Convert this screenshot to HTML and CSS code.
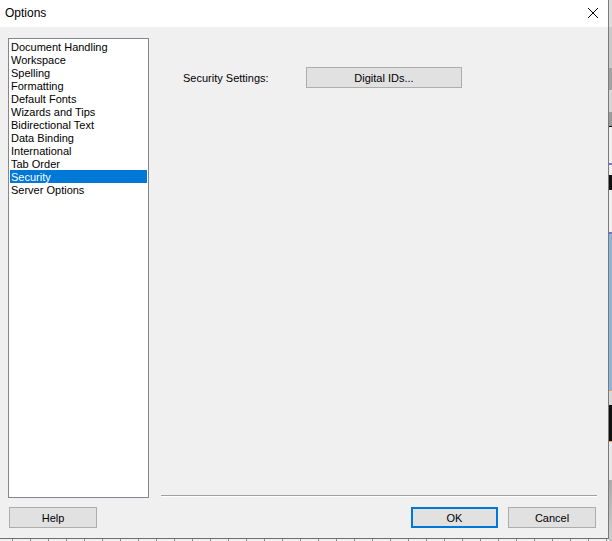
FILE: index.html
```html
<!DOCTYPE html>
<html lang="en">
<head>
	<meta charset="UTF-8">
	<title>Options</title>
	<link rel="stylesheet" href="styles.css">
</head>
<body>
	<div class="screen">
		<div class="dialog">
			<div class="titlebar">
				<span class="title">Options</span>
				<svg class="close" width="12" height="12" viewBox="0 0 12 12">
					<path d="M1 1 L11 11 M11 1 L1 11" stroke="#000" stroke-width="1" fill="none"/>
				</svg>
			</div>
			<div class="content">
				<div class="main">
					<ul class="category-list">
						<li>Document Handling</li>
						<li>Workspace</li>
						<li>Spelling</li>
						<li>Formatting</li>
						<li>Default Fonts</li>
						<li>Wizards and Tips</li>
						<li>Bidirectional Text</li>
						<li>Data Binding</li>
						<li>International</li>
						<li>Tab Order</li>
						<li class="selected">Security</li>
						<li>Server Options</li>
					</ul>
					<div class="panel">
						<div class="setting-row">
							<span class="setting-label">Security Settings:</span>
							<button class="btn btn-wide">Digital IDs...</button>
						</div>
						<div class="separator"></div>
					</div>
				</div>
				<div class="footer">
					<button class="btn">Help</button>
					<div class="footer-right">
						<button class="btn btn-default">OK</button>
						<button class="btn">Cancel</button>
					</div>
				</div>
			</div>
		</div>
		<div class="backdrop">
			<div class="bd bd-1"></div>
			<div class="bd bd-2"></div>
			<div class="bd bd-3"></div>
			<div class="bd bd-4"></div>
			<div class="bd bd-5"></div>
			<div class="bd bd-6"></div>
			<div class="bd bd-7"></div>
			<div class="bd bd-8"></div>
			<div class="bd bd-9"></div>
			<div class="bd bd-10"></div>
			<div class="bd bd-11"></div>
			<div class="bd bd-12"></div>
		</div>
		<div class="ruler"></div>
		<div class="ruler-corner"></div>
	</div>
</body>
</html>
```

FILE: styles.css
```css
* {
	padding: 0;
	margin: 0;
	box-sizing: border-box;
}
body {
	width: 612px;
	height: 541px;
	overflow: hidden;
	background: #f0f0f0;
	font-family: "Liberation Sans", Arial, sans-serif;
	font-size: 11px;
	color: #000;
}

.screen {
	display: grid;
	grid-template-columns: 609px 3px;
	grid-template-rows: 539px 2px;
}

.dialog {
	display: flex;
	flex-direction: column;
	background: #f0f0f0;
	border-right: 1px solid #7a7a7a;
	border-bottom: 1px solid #6f6f6f;
}
.titlebar {
	height: 27px;
	background: #fff;
	display: flex;
	align-items: center;
	justify-content: space-between;
	padding: 0 9px 2px 5px;
}
.title {
	font-size: 12px;
}

.content {
	padding: 11px 11px 0 8px;
}
.main {
	display: flex;
	gap: 12px;
}
.category-list {
	list-style: none;
	width: 141px;
	height: 460px;
	background: #fff;
	border: 1px solid #828790;
	padding: 1px 1px;
}
.category-list li {
	height: 13px;
	line-height: 14px;
	padding-left: 1px;
	white-space: nowrap;
}
.category-list li.selected {
	background: #0078d7;
	color: #fff;
}

.panel {
	flex: 1;
	display: flex;
	flex-direction: column;
}
.setting-row {
	display: flex;
	align-items: center;
	margin-top: 29px;
	padding-left: 22px;
}
.setting-label {
	width: 123px;
}
.separator {
	margin-top: auto;
	margin-bottom: 1px;
	height: 2px;
	border-top: 1px solid #a0a0a0;
	border-bottom: 1px solid #fff;
}

.btn {
	width: 88px;
	height: 21px;
	background: #e1e1e1;
	border: 1px solid #adadad;
	font-family: "Liberation Sans", Arial, sans-serif;
	font-size: 11px;
	color: #000;
}
.btn-wide {
	width: 156px;
}
.btn-default {
	width: 87px;
	border-color: #0078d7;
	box-shadow: inset 0 0 0 1px #0078d7;
}

.footer {
	display: flex;
	justify-content: space-between;
	margin-top: 9px;
	padding: 0 1px 0 1px;
}
.footer-right {
	display: flex;
	gap: 10px;
}

/* window behind the dialog */
.backdrop {
	display: flex;
	flex-direction: column;
	background: #f0f0f0;
}
.bd-1 { height: 27px; background: #dcdcdc; }
.bd-2 { height: 41px; background: #c9c9c9; }
.bd-3 { height: 22px; background: #a3a3a3; }
.bd-4 { height: 22px; background: #d6d6d6; }
.bd-5 { height: 15px; background: #9c9c9c; border-bottom: 1px solid #000; }
.bd-6 { height: 38px; border-bottom: 2px solid #7b6fd0; }
.bd-7 { height: 45px; background: linear-gradient(#f0f0f0 10px, #111 10px, #111 25px, #f0f0f0 25px); }
.bd-8 { height: 24px; border-bottom: 2px solid #7b6fd0; }
.bd-9 { height: 157px; background: #8fb4d9; border-bottom: 1px solid #e0a060; }
.bd-10 { height: 51px; background: linear-gradient(#d8d8d8 14px, #111 14px); border-bottom: 1px solid #e0a060; }
.bd-11 { height: 38px; background: #e8e8e8; }
.bd-12 { flex: 1; background: linear-gradient(#a9a9a9, #cfcfcf); }

.ruler {
	background: repeating-linear-gradient(90deg, #f0f0f0 0, #f0f0f0 12px, #8a8a8a 12px, #8a8a8a 13px, #f0f0f0 13px, #f0f0f0 18px);
}
.ruler-corner {
	background: #c0c0c0;
}
```
